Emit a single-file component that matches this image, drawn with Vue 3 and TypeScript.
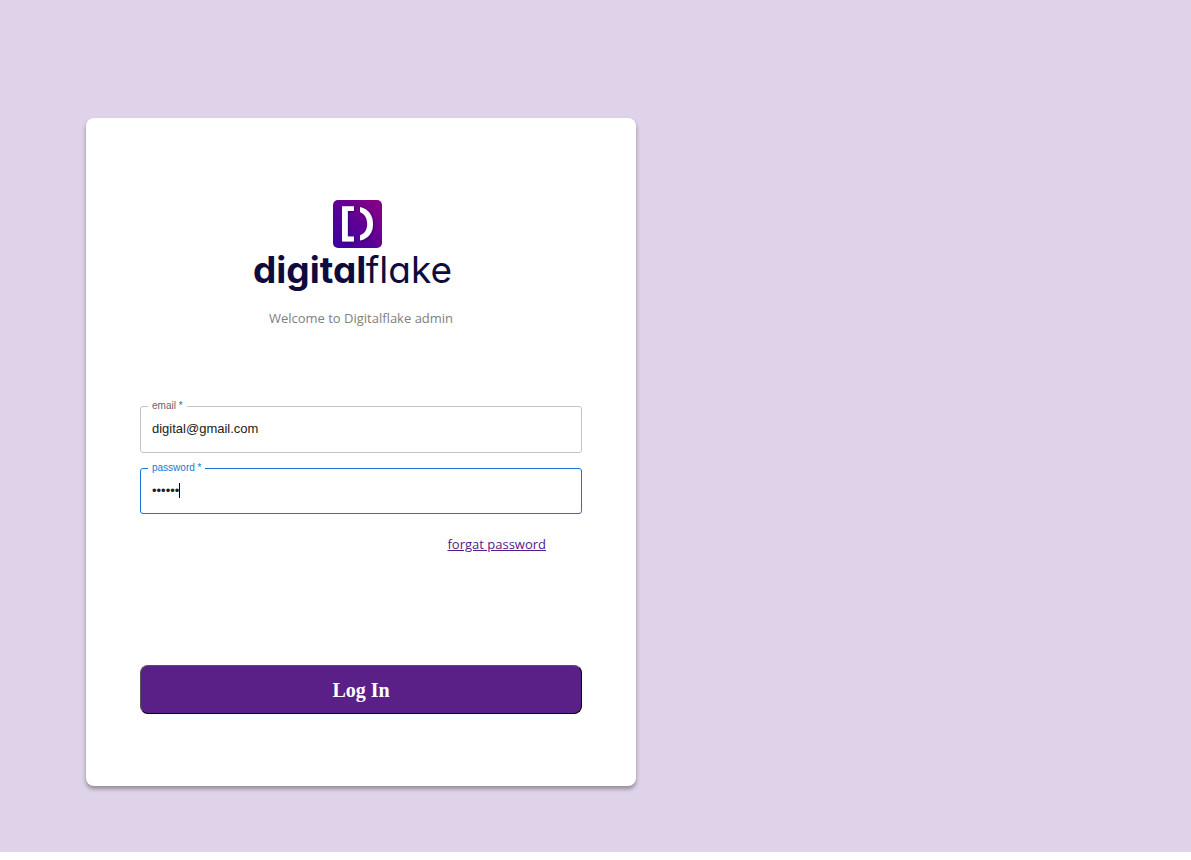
<script setup lang="ts">
import { onMounted, ref } from 'vue'

const email = ref('digital@gmail.com')
const password = ref('secret')
const passwordInput = ref<HTMLInputElement | null>(null)

onMounted(() => {
  const input = passwordInput.value
  if (!input) return
  input.focus()
  input.setSelectionRange(input.value.length, input.value.length)
})
</script>

<template>
  <main class="page">
    <section class="card">
      <header class="brand">
        <svg class="logo" viewBox="0 0 216 96" role="img" aria-label="digitalflake">
          <defs>
            <linearGradient id="tile" x1="0" y1="1" x2="1" y2="0">
              <stop offset="0" stop-color="#3a00a4" />
              <stop offset="0.5" stop-color="#5f0096" />
              <stop offset="1" stop-color="#8b0080" />
            </linearGradient>
            <filter id="glyph-shadow" x="-20%" y="-20%" width="150%" height="150%">
              <feDropShadow dx="1" dy="1" stdDeviation="0.8" flood-color="#1c0050" flood-opacity="0.6" />
            </filter>
          </defs>
          <rect x="80" y="1" width="49" height="48" rx="5" fill="url(#tile)" />
          <g fill="#fff" filter="url(#glyph-shadow)">
            <path d="M89 7.300H101V12H94.800V37.500H101V42.400H89Z" />
            <path d="M107 8C115.500 10 120 16.500 120 25S115.500 39.500 107 41.600V36.300C112 34.500 114.200 30.500 114.200 25S112 15.200 107 13Z" />
          </g>
          <text class="word bold" x="0" y="84">digital</text>
          <text class="word light" x="199" y="84" text-anchor="end">flake</text>
        </svg>
        <p class="welcome">Welcome to Digitalflake admin</p>
      </header>

      <form class="form" @submit.prevent>
        <div class="field">
          <label for="email">email *</label>
          <input id="email" v-model="email" type="email" required />
        </div>
        <div class="field">
          <label for="password">password *</label>
          <input id="password" ref="passwordInput" v-model="password" type="password" required />
          <span class="caret" aria-hidden="true">
            <span class="caret-offset">{{ '•'.repeat(password.length) }}</span>
          </span>
        </div>
        <a class="forgot" href="#forgot">forgat password</a>
        <button class="submit" type="submit">Log In</button>
      </form>
    </section>
  </main>
</template>

<style>
body {
  margin: 0;
  background: #fff;
}
</style>

<style scoped>
.page {
  box-sizing: border-box;
  min-height: calc(100vh - 8px);
  padding: 118px 86px 66px;
  background: #dfd3e9;
}

.card {
  box-sizing: border-box;
  max-width: 550px;
  padding: 81px 54px 72px;
  border-radius: 8px;
  background: #fff;
  box-shadow: 0 3px 4px rgba(0, 0, 0, 0.35);
}

.brand {
  display: flex;
  flex-direction: column;
  align-items: center;
}

.logo {
  display: block;
  width: 216px;
  height: 96px;
}

.word {
  font-family: Inter, "Liberation Sans", sans-serif;
  font-size: 37px;
  font-feature-settings: "cv11";
  fill: #100b3f;
}

.bold {
  font-weight: 700;
}

.light {
  font-weight: 400;
}

.welcome {
  margin: 13px 0 0;
  color: #808080;
  font: 13px/20px "Open Sans", "Noto Sans", sans-serif;
}

.form {
  display: flex;
  flex-direction: column;
  margin-top: 78px;
}

.field {
  position: relative;
  margin-bottom: 15px;
}

.field label {
  position: absolute;
  top: -6px;
  left: 8px;
  padding: 0 4px;
  background: #fff;
  color: #666;
  font: 10px/12px "Liberation Sans", Arial, sans-serif;
}

.field input {
  display: block;
  box-sizing: border-box;
  width: 100%;
  padding: 12px 11px 13px;
  border: 1px solid #c4c4c4;
  border-radius: 3px;
  outline: none;
  background: #fff;
  color: #212121;
  font: 13px/20px "Liberation Sans", Arial, sans-serif;
}

.field input[type="password"] {
  padding-bottom: 12px;
  caret-color: transparent;
}

.caret {
  display: none;
  position: absolute;
  top: 15px;
  left: 12px;
  height: 15px;
  border-right: 1px solid #000;
  font: 13px/15px "Liberation Sans", Arial, sans-serif;
  pointer-events: none;
}

.caret-offset {
  visibility: hidden;
}

.field input:focus + .caret {
  display: block;
}

.field:focus-within label {
  color: #1976d2;
}

.field input:focus {
  border-color: #1976d2;
}

.forgot {
  align-self: flex-end;
  margin: 5px 36px 0 0;
  color: #551a8b;
  font: 13px/20px "Open Sans", "Noto Sans", sans-serif;
}

.submit {
  height: 49px;
  margin-top: 111px;
  border: 1px outset #000;
  border-radius: 8px;
  background: #5b2088;
  color: #fff;
  font: bold 20px/24px "Liberation Serif", "Times New Roman", serif;
  cursor: pointer;
}
</style>
